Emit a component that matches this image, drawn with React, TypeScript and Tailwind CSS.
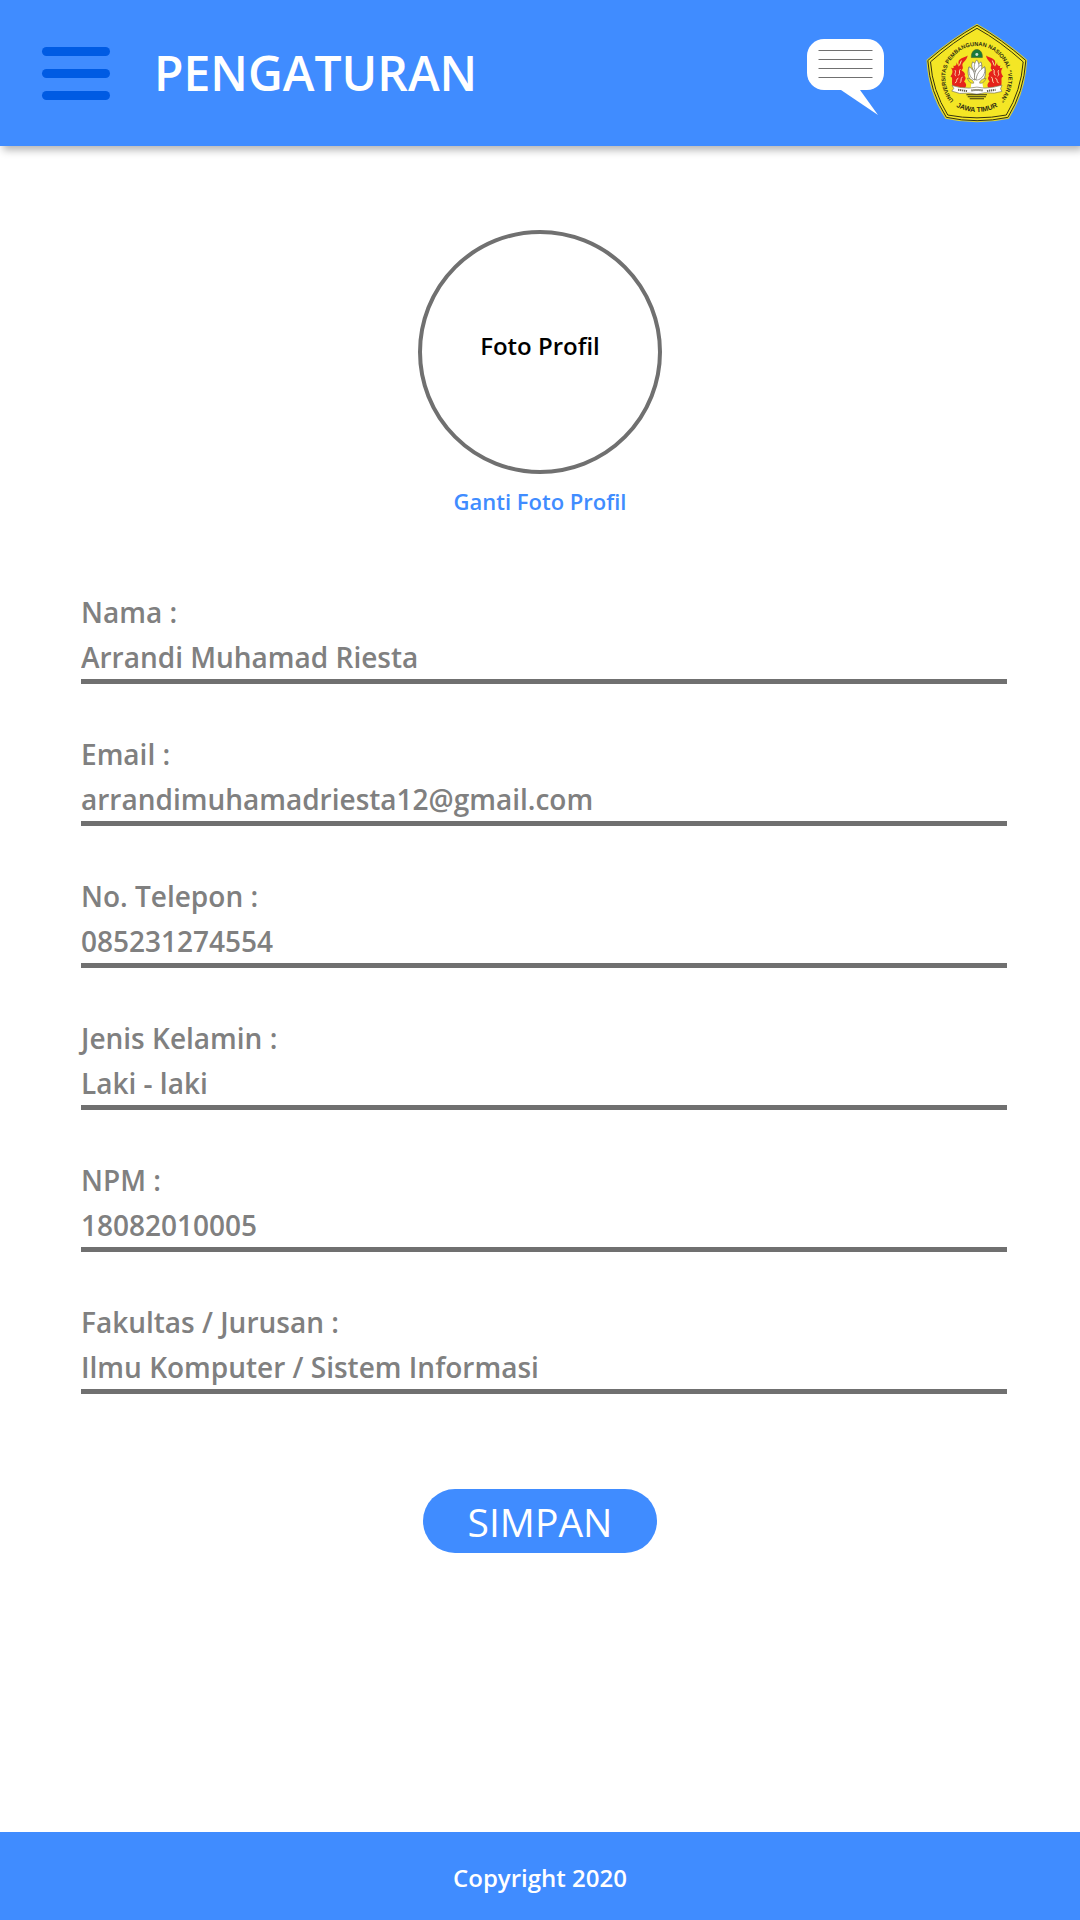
import React from "react";

type Field = { id: string; label: string; value: string; type: string };

const fields: Field[] = [
  { id: "nama", label: "Nama :", value: "Arrandi Muhamad Riesta", type: "text" },
  { id: "email", label: "Email :", value: "arrandimuhamadriesta12@gmail.com", type: "email" },
  { id: "telepon", label: "No. Telepon :", value: "085231274554", type: "tel" },
  { id: "kelamin", label: "Jenis Kelamin :", value: "Laki - laki", type: "text" },
  { id: "npm", label: "NPM :", value: "18082010005", type: "text" },
  { id: "fakultas", label: "Fakultas / Jurusan :", value: "Ilmu Komputer / Sistem Informasi", type: "text" },
];

function ChatIcon() {
  return (
    <svg viewBox="0 0 78 77" className="h-[77px] w-[78px]" aria-hidden="true">
      <rect x="0" y="0" width="77" height="51" rx="17" fill="#fff" />
      <path d="M34 51 L71 76 L53 51 Z" fill="#fff" />
      <g stroke="#707070" strokeWidth="1">
        <path d="M11.500 11.500H65.500" />
        <path d="M11.500 20.500H65.500" />
        <path d="M11.500 29.500H65.500" />
        <path d="M11.500 38.500H65.500" />
      </g>
    </svg>
  );
}

function Flame() {
  return (
    <g>
      <path
        d="M562 168 C553 175 541 174 535 184 C532 191 537 197 535 202 L528 188 C530 197 525 200 518 199 C524 206 517 208 511 204 C518 213 518 220 510 231 C519 234 513 243 516 258 L553 266 C561 258 557 251 551 246 C556 240 558 236 552 229 C557 223 551 217 543 212 C551 207 546 202 546 196 C547 187 559 184 562 168 Z"
        fill="#e5231b"
      />
      <path
        d="M543 183 L537 198 M540 209 C533 214 542 220 534 228 M524 212 C529 219 519 224 527 230 M534 236 C525 239 532 246 524 251 M546 232 C539 239 545 244 539 250"
        fill="none"
        stroke="#f8dcae"
        strokeWidth="3"
      />
    </g>
  );
}

function Lotus() {
  return (
    <g stroke="#6b695c" strokeWidth="2" strokeLinejoin="round">
      <path d="M566 202 C560 218 563 237 578 250 L603 250 C616 237 618 218 613 202 L600 212 L589 206 L577 212 Z" fill="#fff" />
      <path d="M577 187 C572 198 574 206 583 216 L592 202 C588 196 583 190 577 187 Z" fill="#fff" />
      <path d="M602 187 C606 196 605 206 597 214 L588 202 C592 196 597 190 602 187 Z" fill="#fff" />
      <path d="M589 181 C580 193 579 207 588 219 C598 207 599 193 589 181 Z" fill="#fff" />
      <path d="M566 202 C564 221 569 236 583 242 C586 224 579 209 566 202 Z" fill="#fff" />
      <path d="M604 196 C587 205 580 220 583 242 C598 234 607 216 604 196 Z" fill="#fff" />
      <path d="M613 202 C597 212 588 225 587 243 C606 240 617 222 613 202 Z" fill="#fff" />
      <path d="M574 243 H605 L609 268 H571 Z" fill="#fff" stroke="none" />
    </g>
  );
}

function CampusLogo() {
  return (
    <svg
      viewBox="437 70 306 301"
      className="h-[100px] w-[102px]"
      role="img"
      aria-label="Universitas Pembangunan Nasional Veteran Jawa Timur"
    >
      <defs>
        <path id="arc-top" d="M523 307 C485 265 487 205 518 174 C553 127 626 127 661 174 C692 205 694 265 656 307" />
        <path id="arc-bottom" d="M520 318 Q590 358 660 318" />
      </defs>
      <path
        d="M590 72 Q667 116 741 181 Q736 280 686 358 Q590 380 495 358 Q443 280 438 181 Q513 116 590 72 Z"
        fill="#d9d234"
      />
      <path
        d="M590 77 Q664 119 737 183 Q731 277 683 354 Q590 374 498 354 Q448 277 442 183 Q516 119 590 77 Z"
        fill="#f4e625"
        stroke="#34320f"
        strokeWidth="3"
      />
      <path
        d="M590 86 Q660 125 729 187 Q723 273 678 347 Q590 364 502 347 Q456 273 450 187 Q520 125 590 86 Z"
        fill="none"
        stroke="#34320f"
        strokeWidth="3"
      />
      <text fill="#2f2d12" fontSize="17" fontWeight="700" fontFamily="'Liberation Sans', Arial, sans-serif">
        <textPath href="#arc-top" startOffset="50%" textAnchor="middle">
          UNIVERSITAS PEMBANGUNAN NASIONAL “VETERAN”
        </textPath>
      </text>
      <text fill="#2f2d12" fontSize="21" fontWeight="700" fontFamily="'Liberation Sans', Arial, sans-serif">
        <textPath href="#arc-bottom" startOffset="50%" textAnchor="middle">
          JAWA TIMUR
        </textPath>
      </text>
      <Flame />
      <g transform="translate(1179 0) scale(-1 1)">
        <Flame />
      </g>
      <path d="M573 174 C571 142 608 142 606 174 Z" fill="#17793e" stroke="#4c6b22" strokeWidth="2" />
      <circle cx="589.500" cy="165" r="4.500" fill="#cde3d0" />
      <Lotus />
      <path
        d="M561 236 C572 238 580 243 580 251 C573 252 566 250 561 236 Z M617 236 C606 238 598 243 598 251 C605 252 612 250 617 236 Z"
        fill="#f4e625"
        stroke="#77725a"
        strokeWidth="2"
      />
      <path
        d="M515 258 L538 264 L566 266 Q590 260 613 266 L640 263 L665 257 L661 268 L665 276 L642 281 L613 280 Q590 288 566 281 L538 282 L514 275 L520 267 Z"
        fill="#fff"
        stroke="#77725a"
        strokeWidth="2"
      />
      <path
        d="M533 271 L560 275 M620 275 L646 271 M573 273 Q590 270 607 273"
        fill="none"
        stroke="#66634f"
        strokeWidth="6"
        strokeDasharray="4 2"
      />
      <path d="M558 286 H620 M562 292 H617 M568 298 H611" stroke="#34320f" strokeWidth="3.500" />
    </svg>
  );
}

export default function App() {
  return (
    <div className="flex min-h-screen flex-col bg-white font-['Open_Sans','Noto_Sans',sans-serif]">
      <header className="flex h-[146px] items-center bg-[#408cff] pr-[52px] pl-[42px] shadow-[3px_4px_8px_rgba(0,0,0,0.3)]">
        <button type="button" aria-label="Menu" className="flex w-[68px] flex-col gap-[13px]">
          <span className="h-[9px] rounded-full bg-[#005be3]" />
          <span className="h-[9px] rounded-full bg-[#005be3]" />
          <span className="h-[9px] rounded-full bg-[#005be3]" />
        </button>
        <h1 className="ml-11 text-5xl leading-none font-semibold text-white">PENGATURAN</h1>
        <div className="ml-auto flex items-center gap-[41px]">
          <button type="button" aria-label="Pesan" className="pt-2">
            <ChatIcon />
          </button>
          <a href="#beranda">
            <CampusLogo />
          </a>
        </div>
      </header>

      <main className="flex flex-1 flex-col">
        <section className="mt-[84px] flex flex-col items-center">
          <div className="flex size-[244px] items-center justify-center rounded-full border-4 border-[#707070] pb-3">
            <span className="text-2xl leading-8 font-semibold text-black">Foto Profil</span>
          </div>
          <button type="button" className="mt-[11px] text-[22px] leading-8 font-semibold text-[#408cff]">
            Ganti Foto Profil
          </button>
        </section>

        <form className="flex flex-col pt-[72px] pr-[73px] pl-[81px]" onSubmit={(e) => e.preventDefault()}>
          <div className="flex flex-col gap-[47px]">
            {fields.map((f) => (
              <div key={f.id} className="flex flex-col border-b-[5px] border-[#707070] text-[28px] font-semibold text-[#808080]">
                <label htmlFor={f.id} className="leading-[47px]">
                  {f.label}
                </label>
                <input
                  id={f.id}
                  type={f.type}
                  defaultValue={f.value}
                  className="h-[43px] w-full bg-transparent leading-[43px] outline-none"
                />
              </div>
            ))}
          </div>
          <button
            type="submit"
            className="mt-[95px] -ml-2 h-16 w-[234px] self-center rounded-full bg-[#408cff] text-[39px] leading-none text-white"
          >
            SIMPAN
          </button>
        </form>
      </main>

      <footer className="flex h-[88px] items-center justify-center bg-[#408cff] pt-1">
        <p className="text-2xl font-semibold text-white">Copyright 2020</p>
      </footer>
    </div>
  );
}
